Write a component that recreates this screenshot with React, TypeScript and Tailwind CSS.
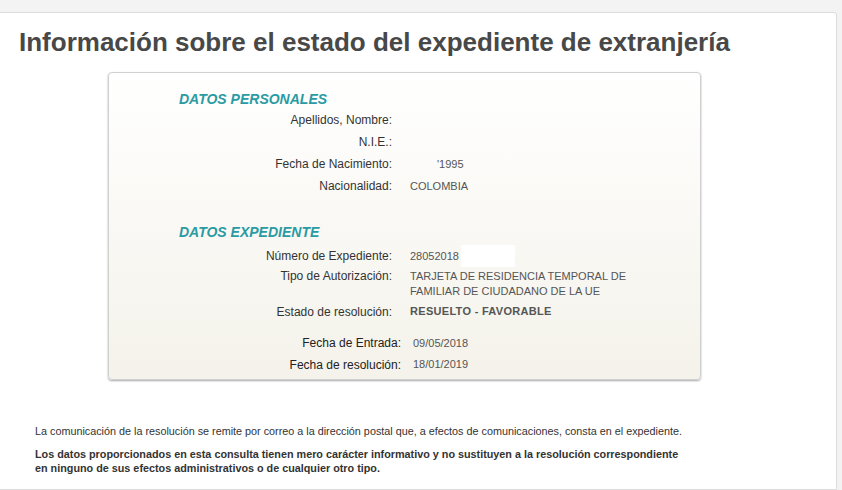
export default function App() {
  const personal = [
    { label: "Apellidos, Nombre:", value: "" },
    { label: "N.I.E.:", value: "" },
    { label: "Fecha de Nacimiento:", value: "'1995", indent: true },
    { label: "Nacionalidad:", value: "COLOMBIA" },
  ];

  return (
    <div
      className="min-h-[490px] w-[842px] overflow-hidden bg-[#f3f3f3] pt-[12px]"
      style={{ fontFamily: '"Liberation Sans", Arial, sans-serif' }}
    >
      <div className="ml-[-10px] h-[478px] w-[847px] rounded-tr-[3px] border border-[#dcdcdc] bg-white">
        <h1 className="ml-[28px] mt-[14px] text-[26px] font-bold leading-[30px] text-[#484848]">
          Información sobre el estado del expediente de extranjería
        </h1>

        <div className="ml-[117px] mt-[15px] h-[308px] w-[593px] rounded-[4px] border border-[#d0d0d0] bg-gradient-to-b from-[#ffffff] to-[#f4f2ea] pl-[70px] pt-[17px] shadow-[0_1px_2px_rgba(0,0,0,0.35)]">
          <h2 className="text-[14px] font-bold italic leading-[18px] text-[#2a9ba3]">DATOS PERSONALES</h2>
          <div className="mt-[1px]">
            {personal.map((r) => (
              <div key={r.label} className="flex h-[22px] items-center">
                <div className="w-[213px] text-right text-[12px] text-[#333]">{r.label}</div>
                <div className={`text-[11px] text-[#555] ${r.indent ? "pl-[45px]" : "pl-[18px]"}`}>{r.value}</div>
              </div>
            ))}
          </div>

          <h2 className="mt-[26px] text-[14px] font-bold italic leading-[18px] text-[#2a9ba3]">DATOS EXPEDIENTE</h2>
          <div className="mt-[4px]">
            <div className="flex h-[22px] items-center">
              <div className="w-[213px] text-right text-[12px] text-[#333]">Número de Expediente:</div>
              <div className="flex items-center pl-[18px] text-[11px] text-[#555]">
                28052018
                <span className="ml-[2px] inline-block h-[22px] w-[54px] bg-white" />
              </div>
            </div>
            <div className="flex pt-[2px]">
              <div className="w-[213px] text-right text-[12px] leading-[15px] text-[#333]">Tipo de Autorización:</div>
              <div className="pl-[18px] text-[11px] leading-[15px] text-[#555]">
                TARJETA DE RESIDENCIA TEMPORAL DE
                <br />
                FAMILIAR DE CIUDADANO DE LA UE
              </div>
            </div>
            <div className="flex h-[25px] items-center">
              <div className="w-[213px] text-right text-[12px] text-[#333]">Estado de resolución:</div>
              <div className="pl-[18px] text-[11px] font-bold tracking-[0.3px] text-[#555]">RESUELTO - FAVORABLE</div>
            </div>
          </div>

          <div className="mt-[8px]">
            <div className="flex h-[22px] items-center">
              <div className="w-[222px] text-right text-[12px] text-[#222]">Fecha de Entrada:</div>
              <div className="pl-[12px] text-[11px] text-[#555]">09/05/2018</div>
            </div>
            <div className="flex h-[21px] items-center">
              <div className="w-[222px] text-right text-[12px] text-[#222]">Fecha de resolución:</div>
              <div className="pl-[12px] text-[11px] text-[#555]">18/01/2019</div>
            </div>
          </div>
        </div>

        <div className="ml-[44px] mt-[44px] text-[10.8px] text-[#333]">
          <p className="leading-[14px]">
            La comunicación de la resolución se remite por correo a la dirección postal que, a efectos de comunicaciones, consta en el expediente.
          </p>
          <p className="mt-[9px] font-bold leading-[14px]">
            Los datos proporcionados en esta consulta tienen mero carácter informativo y no sustituyen a la resolución correspondiente
            <br />
            en ninguno de sus efectos administrativos o de cualquier otro tipo.
          </p>
        </div>
      </div>
    </div>
  );
}
